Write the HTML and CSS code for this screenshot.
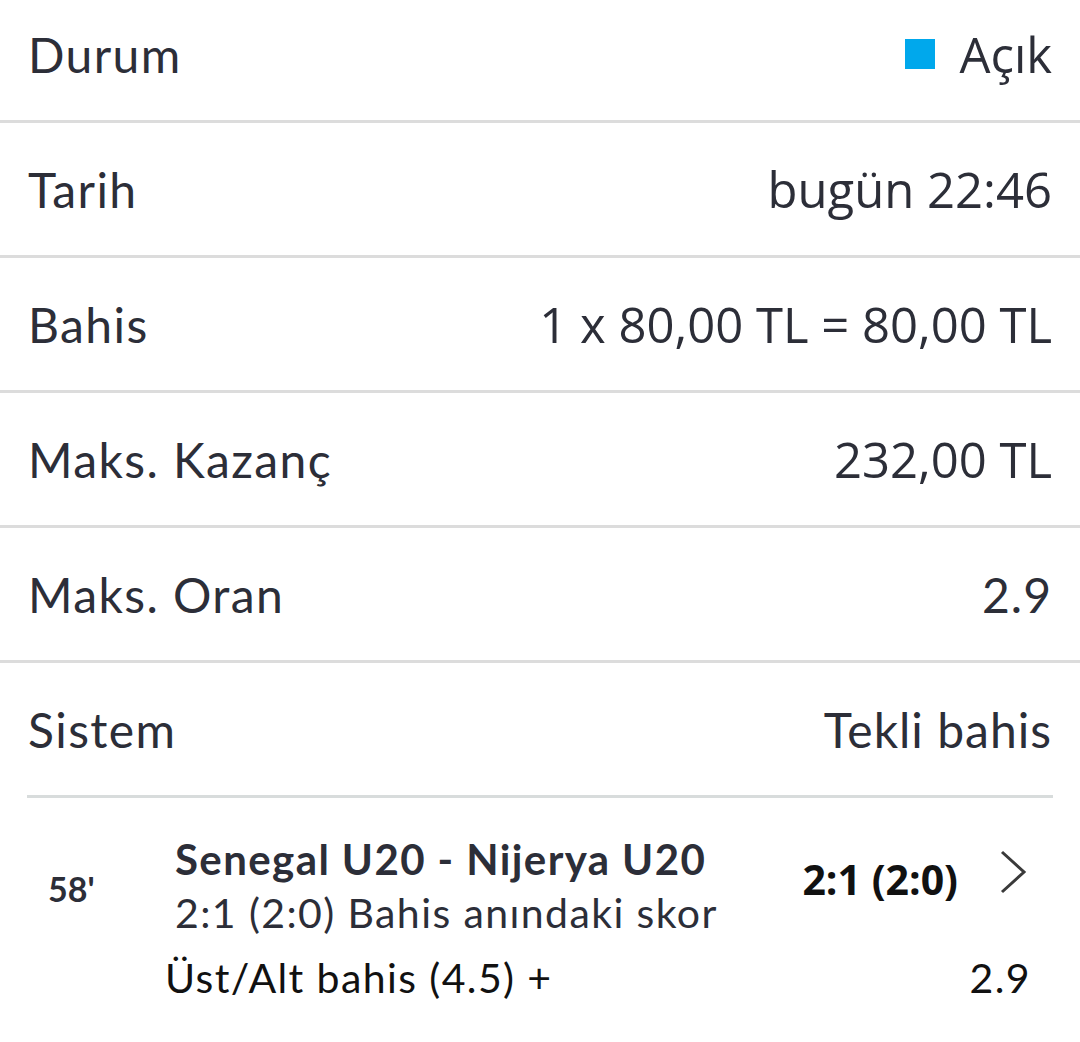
FILE: index.html
```html
<!DOCTYPE html>
<html lang="tr">
<head>
    <meta charset="UTF-8">
    <title>Bahis Detayı</title>
    <link rel="stylesheet" href="styles.css">
</head>
<body>

<div class="bet-details">
    <div class="row">
        <div class="label">Durum</div>
        <div class="value status"><span class="status-dot"></span>Açık</div>
    </div>
    <div class="row">
        <div class="label">Tarih</div>
        <div class="value">bugün 22:46</div>
    </div>
    <div class="row">
        <div class="label">Bahis</div>
        <div class="value">1 x 80,00 TL = 80,00 TL</div>
    </div>
    <div class="row">
        <div class="label">Maks. Kazanç</div>
        <div class="value">232,00 TL</div>
    </div>
    <div class="row">
        <div class="label">Maks. Oran</div>
        <div class="value alt">2.9</div>
    </div>
    <div class="row last">
        <div class="label">Sistem</div>
        <div class="value alt">Tekli bahis</div>
    </div>

    <div class="event">
        <div class="event-head">
            <div class="minute">58'</div>
            <div class="teams">
                <div class="team-names">Senegal U20 - Nijerya U20</div>
                <div class="bet-score">2:1 (2:0) Bahis anındaki skor</div>
            </div>
            <div class="live-score">2:1 (2:0)</div>
            <svg class="chevron" width="30" height="46" viewBox="0 0 30 46">
                <path d="M4 2 L26 22 L4 42" fill="none" stroke="#3a3a3a" stroke-width="3"/>
            </svg>
        </div>
        <div class="selection">
            <div class="market">Üst/Alt bahis (4.5) +</div>
            <div class="odd">2.9</div>
        </div>
    </div>
</div>

</body>
</html>
```

FILE: styles.css
```css
body {
    margin: 0;
    background: #fff;
    font-family: Lato, "Open Sans", sans-serif;
    color: #2c2e38;
}
.bet-details {
    margin-top: -12px;
}
.row {
    display: flex;
    justify-content: space-between;
    align-items: center;
    height: 132px;
    padding: 0 28px;
    border-bottom: 3px solid #dcdcdc;
    font-size: 48px;
}
.row.last {
    border-bottom: none;
}
.label {
    letter-spacing: 1.4px;
}
.value {
    font-family: "Open Sans", sans-serif;
    font-size: 49px;
}
.value.alt {
    font-family: Lato, sans-serif;
    font-size: 48px;
    letter-spacing: 1px;
}
.status {
    display: flex;
    align-items: center;
}
.status-dot {
    width: 30px;
    height: 30px;
    background: #00a8ec;
    margin-right: 24px;
}
.event {
    margin: 0 27px;
    border-top: 3px solid #d8dcdc;
    padding-top: 34px;
}
.event-head {
    display: flex;
    align-items: center;
}
.minute {
    width: 148px;
    box-sizing: border-box;
    padding-left: 21px;
    padding-top: 4px;
    font-size: 34px;
    font-weight: bold;
}
.teams {
    flex: 1;
}
.team-names {
    font-size: 42px;
    font-weight: bold;
    line-height: 54px;
    letter-spacing: 1.4px;
}
.bet-score {
    font-size: 41px;
    line-height: 54px;
    letter-spacing: 1.4px;
}
.live-score {
    font-family: "Open Sans", sans-serif;
    font-size: 41px;
    font-weight: bold;
    color: #111;
    margin-bottom: 14px;
}
.chevron {
    margin: 0 25px 26px 40px;
}
.selection {
    display: flex;
    justify-content: space-between;
    align-items: baseline;
    padding: 13px 22px 0 138px;
    font-size: 41px;
    letter-spacing: 1.4px;
    color: #111;
}
```
